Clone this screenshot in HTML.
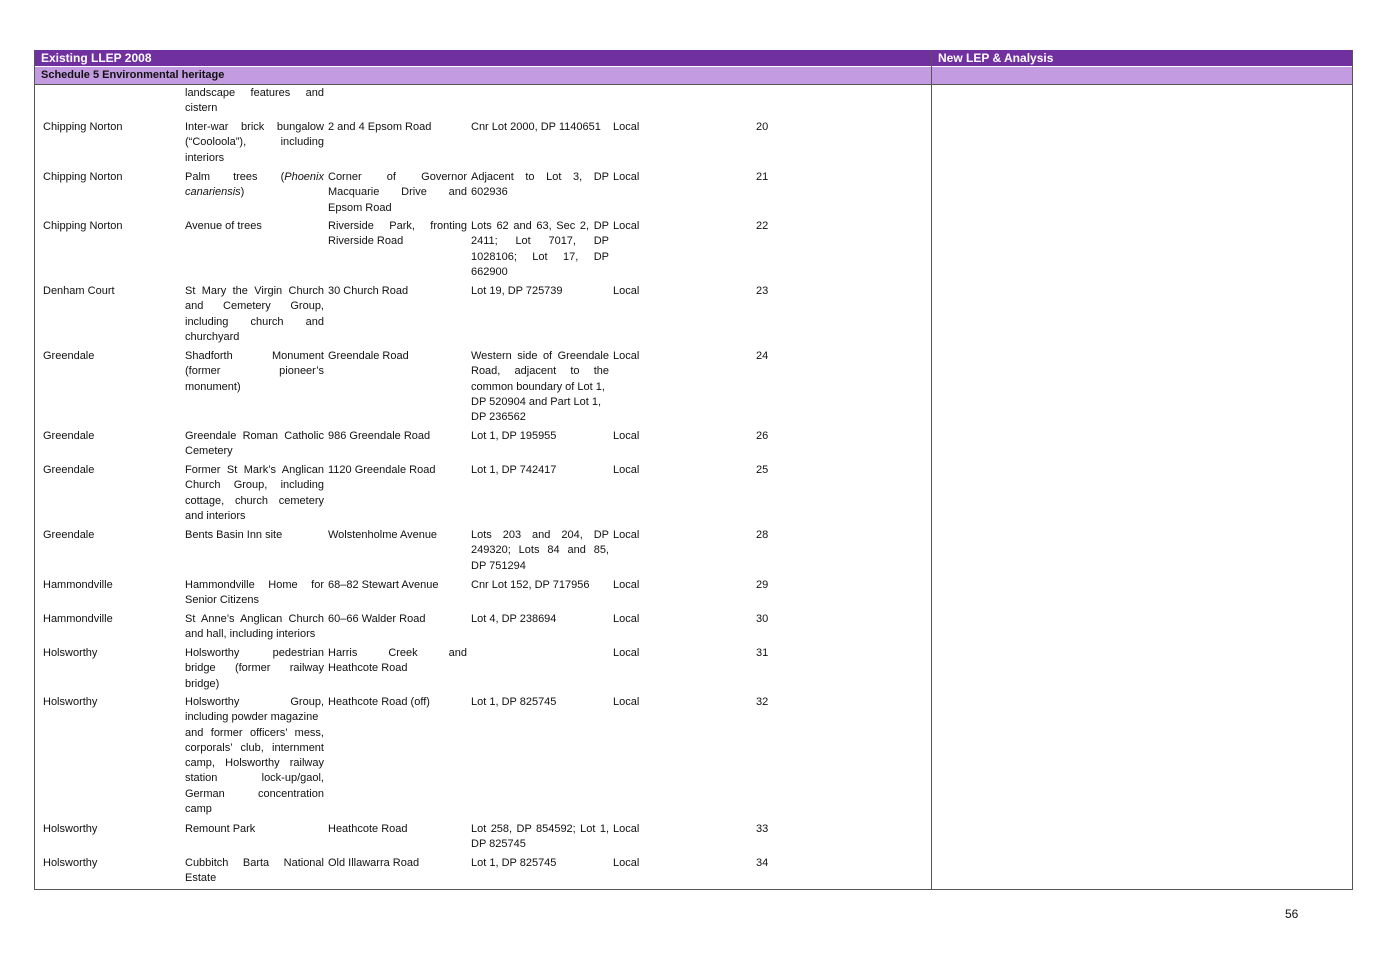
<!DOCTYPE html>
<html><head><meta charset="utf-8"><style>
body{margin:0;background:#fff;width:1382px;height:977px;position:relative;font-family:"Liberation Sans",Arial,sans-serif;font-size:11px;color:#111;overflow:hidden}
.box{position:absolute;left:34px;top:50px;width:1317px;height:838px;border:1px solid #555}
.h1{position:absolute;left:35px;top:50px;width:1317px;height:16px;background:#7030a0;color:#fff;font-weight:bold;font-size:12px;line-height:16px}
.h2{position:absolute;left:35px;top:67px;width:1317px;height:17px;background:#c39be0;border-bottom:1px solid #555;font-weight:bold;font-size:11px;line-height:16px}
.vl{position:absolute;left:931px;top:50px;width:1px;height:839px;background:#555}
.c{position:absolute;width:139px}
.c div{height:15.3px;line-height:15.3px;white-space:nowrap;overflow:hidden}
.c div.j{text-align:justify;text-align-last:justify;white-space:normal}
</style></head><body>
<div class="box"></div>
<div class="h1"><span style="position:absolute;left:6px">Existing LLEP 2008</span><span style="position:absolute;left:903px">New LEP &amp; Analysis</span></div>
<div class="h2"><span style="position:absolute;left:6px">Schedule 5 Environmental heritage</span></div>
<div class="vl"></div>

<div class="c" style="left:185px;top:86px"><div class="j">landscape features and</div><div>cistern</div></div>

<div class="c" style="left:43px;top:120px"><div>Chipping Norton</div></div>
<div class="c" style="left:185px;top:120px"><div class="j">Inter-war brick bungalow</div><div class="j">(“Cooloola”), including</div><div>interiors</div></div>
<div class="c" style="left:328px;top:120px"><div>2 and 4 Epsom Road</div></div>
<div class="c" style="left:471px;top:120px"><div>Cnr Lot 2000, DP 1140651</div></div>
<div class="c" style="left:613px;top:120px"><div>Local</div></div>
<div class="c" style="left:756px;top:120px"><div>20</div></div>

<div class="c" style="left:43px;top:170px"><div>Chipping Norton</div></div>
<div class="c" style="left:185px;top:170px"><div class="j">Palm trees (<i>Phoenix</i></div><div><i>canariensis</i>)</div></div>
<div class="c" style="left:328px;top:170px"><div class="j">Corner of Governor</div><div class="j">Macquarie Drive and</div><div>Epsom Road</div></div>
<div class="c" style="left:471px;top:170px;width:138px"><div class="j">Adjacent to Lot 3, DP</div><div>602936</div></div>
<div class="c" style="left:613px;top:170px"><div>Local</div></div>
<div class="c" style="left:756px;top:170px"><div>21</div></div>

<div class="c" style="left:43px;top:219px"><div>Chipping Norton</div></div>
<div class="c" style="left:185px;top:219px"><div>Avenue of trees</div></div>
<div class="c" style="left:328px;top:219px"><div class="j">Riverside Park, fronting</div><div>Riverside Road</div></div>
<div class="c" style="left:471px;top:219px;width:138px"><div class="j">Lots 62 and 63, Sec 2, DP</div><div class="j">2411; Lot 7017, DP</div><div class="j">1028106; Lot 17, DP</div><div>662900</div></div>
<div class="c" style="left:613px;top:219px"><div>Local</div></div>
<div class="c" style="left:756px;top:219px"><div>22</div></div>

<div class="c" style="left:43px;top:284px"><div>Denham Court</div></div>
<div class="c" style="left:185px;top:284px"><div class="j">St Mary the Virgin Church</div><div class="j">and Cemetery Group,</div><div class="j">including church and</div><div>churchyard</div></div>
<div class="c" style="left:328px;top:284px"><div>30 Church Road</div></div>
<div class="c" style="left:471px;top:284px"><div>Lot 19, DP 725739</div></div>
<div class="c" style="left:613px;top:284px"><div>Local</div></div>
<div class="c" style="left:756px;top:284px"><div>23</div></div>

<div class="c" style="left:43px;top:349px"><div>Greendale</div></div>
<div class="c" style="left:185px;top:349px"><div class="j">Shadforth Monument</div><div class="j">(former pioneer’s</div><div>monument)</div></div>
<div class="c" style="left:328px;top:349px"><div>Greendale Road</div></div>
<div class="c" style="left:471px;top:349px;width:138px"><div class="j">Western side of Greendale</div><div class="j">Road, adjacent to the</div><div>common boundary of Lot 1,</div><div>DP 520904 and Part Lot 1,</div><div>DP 236562</div></div>
<div class="c" style="left:613px;top:349px"><div>Local</div></div>
<div class="c" style="left:756px;top:349px"><div>24</div></div>

<div class="c" style="left:43px;top:429px"><div>Greendale</div></div>
<div class="c" style="left:185px;top:429px"><div class="j">Greendale Roman Catholic</div><div>Cemetery</div></div>
<div class="c" style="left:328px;top:429px"><div>986 Greendale Road</div></div>
<div class="c" style="left:471px;top:429px"><div>Lot 1, DP 195955</div></div>
<div class="c" style="left:613px;top:429px"><div>Local</div></div>
<div class="c" style="left:756px;top:429px"><div>26</div></div>

<div class="c" style="left:43px;top:463px"><div>Greendale</div></div>
<div class="c" style="left:185px;top:463px"><div class="j">Former St Mark’s Anglican</div><div class="j">Church Group, including</div><div class="j">cottage, church cemetery</div><div>and interiors</div></div>
<div class="c" style="left:328px;top:463px"><div>1120 Greendale Road</div></div>
<div class="c" style="left:471px;top:463px"><div>Lot 1, DP 742417</div></div>
<div class="c" style="left:613px;top:463px"><div>Local</div></div>
<div class="c" style="left:756px;top:463px"><div>25</div></div>

<div class="c" style="left:43px;top:528px"><div>Greendale</div></div>
<div class="c" style="left:185px;top:528px"><div>Bents Basin Inn site</div></div>
<div class="c" style="left:328px;top:528px"><div>Wolstenholme Avenue</div></div>
<div class="c" style="left:471px;top:528px;width:138px"><div class="j">Lots 203 and 204, DP</div><div class="j">249320; Lots 84 and 85,</div><div>DP 751294</div></div>
<div class="c" style="left:613px;top:528px"><div>Local</div></div>
<div class="c" style="left:756px;top:528px"><div>28</div></div>

<div class="c" style="left:43px;top:578px"><div>Hammondville</div></div>
<div class="c" style="left:185px;top:578px"><div class="j">Hammondville Home for</div><div>Senior Citizens</div></div>
<div class="c" style="left:328px;top:578px"><div>68–82 Stewart Avenue</div></div>
<div class="c" style="left:471px;top:578px"><div>Cnr Lot 152, DP 717956</div></div>
<div class="c" style="left:613px;top:578px"><div>Local</div></div>
<div class="c" style="left:756px;top:578px"><div>29</div></div>

<div class="c" style="left:43px;top:612px"><div>Hammondville</div></div>
<div class="c" style="left:185px;top:612px"><div class="j">St Anne’s Anglican Church</div><div>and hall, including interiors</div></div>
<div class="c" style="left:328px;top:612px"><div>60–66 Walder Road</div></div>
<div class="c" style="left:471px;top:612px"><div>Lot 4, DP 238694</div></div>
<div class="c" style="left:613px;top:612px"><div>Local</div></div>
<div class="c" style="left:756px;top:612px"><div>30</div></div>

<div class="c" style="left:43px;top:646px"><div>Holsworthy</div></div>
<div class="c" style="left:185px;top:646px"><div class="j">Holsworthy pedestrian</div><div class="j">bridge (former railway</div><div>bridge)</div></div>
<div class="c" style="left:328px;top:646px"><div class="j">Harris Creek and</div><div>Heathcote Road</div></div>
<div class="c" style="left:613px;top:646px"><div>Local</div></div>
<div class="c" style="left:756px;top:646px"><div>31</div></div>

<div class="c" style="left:43px;top:695px"><div>Holsworthy</div></div>
<div class="c" style="left:185px;top:695px"><div class="j">Holsworthy Group,</div><div>including powder magazine</div><div class="j">and former officers’ mess,</div><div class="j">corporals’ club, internment</div><div class="j">camp, Holsworthy railway</div><div class="j">station lock-up/gaol,</div><div class="j">German concentration</div><div>camp</div></div>
<div class="c" style="left:328px;top:695px"><div>Heathcote Road (off)</div></div>
<div class="c" style="left:471px;top:695px"><div>Lot 1, DP 825745</div></div>
<div class="c" style="left:613px;top:695px"><div>Local</div></div>
<div class="c" style="left:756px;top:695px"><div>32</div></div>

<div class="c" style="left:43px;top:822px"><div>Holsworthy</div></div>
<div class="c" style="left:185px;top:822px"><div>Remount Park</div></div>
<div class="c" style="left:328px;top:822px"><div>Heathcote Road</div></div>
<div class="c" style="left:471px;top:822px;width:138px"><div class="j">Lot 258, DP 854592; Lot 1,</div><div>DP 825745</div></div>
<div class="c" style="left:613px;top:822px"><div>Local</div></div>
<div class="c" style="left:756px;top:822px"><div>33</div></div>

<div class="c" style="left:43px;top:856px"><div>Holsworthy</div></div>
<div class="c" style="left:185px;top:856px"><div class="j">Cubbitch Barta National</div><div>Estate</div></div>
<div class="c" style="left:328px;top:856px"><div>Old Illawarra Road</div></div>
<div class="c" style="left:471px;top:856px"><div>Lot 1, DP 825745</div></div>
<div class="c" style="left:613px;top:856px"><div>Local</div></div>
<div class="c" style="left:756px;top:856px"><div>34</div></div>

<div style="position:absolute;left:1285px;top:907px;font-size:12px">56</div>
</body></html>
